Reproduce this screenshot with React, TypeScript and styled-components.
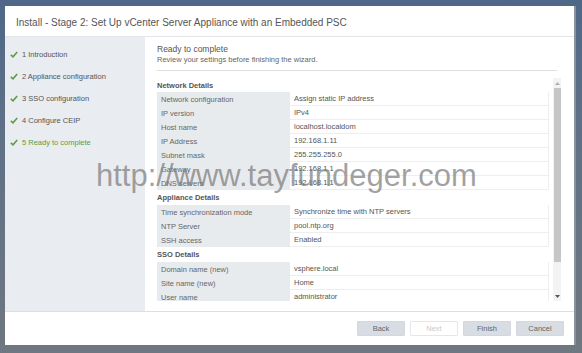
import { FC, ReactElement } from "react";
import styled, { createGlobalStyle } from "styled-components";

const GlobalStyle = createGlobalStyle`
    html, body {
        margin: 0;
        padding: 0;
        width: 582px;
        height: 353px;
        overflow: hidden;
        font-family: "Liberation Sans", Arial, sans-serif;
    }
`;

const Page = styled.div`
    position: relative;
    width: 582px;
    height: 353px;
    box-sizing: border-box;
    padding: 6px 6px 8px 5px;
    background: linear-gradient(180deg, #4f6888 0%, #5f7186 40%, #6f7780 100%);
`;

const Dialog = styled.div`
    display: flex;
    flex-direction: column;
    width: 569px;
    height: 339px;
    background: #ffffff;
    border-right: 2px solid #8a939d;
    box-sizing: content-box;
`;

const Header = styled.div`
    display: flex;
    align-items: center;
    height: 31px;
    padding: 3px 0 0 11px;
    box-sizing: border-box;
    border-bottom: 1px solid #e3e5e8;
    font-size: 10px;
    color: #555;
    flex-shrink: 0;
`;

const Body = styled.div`
    display: flex;
    flex-direction: row;
    height: 274px;
    flex-shrink: 0;
`;

const Sidebar = styled.nav`
    display: flex;
    flex-direction: column;
    width: 140px;
    padding-top: 6px;
    box-sizing: border-box;
    background: #e9ecf0;
`;

const Step = styled.div<{ $active: boolean }>`
    display: flex;
    align-items: center;
    gap: 4px;
    height: 22px;
    padding-left: 5px;
    font-size: 7.5px;
    color: ${(p) => (p.$active ? "#5e9c43" : "#555")};
`;

const Content = styled.section`
    display: flex;
    flex-direction: column;
    flex: 1;
    padding: 7px 13px 0 12px;
    min-width: 0;
`;

const PageTitle = styled.div`
    font-size: 8.5px;
    line-height: 11px;
    color: #555;
`;

const PageSub = styled.div`
    font-size: 7.5px;
    line-height: 10px;
    color: #666;
    padding-bottom: 5px;
    border-bottom: 1px solid #dcdfe3;
    margin-right: 4px;
`;

const ScrollArea = styled.div`
    display: flex;
    flex-direction: row;
    gap: 4px;
    margin-top: 7px;
    height: 223px;
`;

const TableClip = styled.div`
    flex: 1;
    overflow: hidden;
`;

const SectionTitle = styled.div<{ $spaced: boolean }>`
    display: flex;
    align-items: center;
    height: ${(p) => (p.$spaced ? "15px" : "14px")};
    font-size: 7.5px;
    font-weight: bold;
    color: #555;
`;

const Row = styled.div`
    display: grid;
    grid-template-columns: 133px 1fr;
    height: 14px;
    font-size: 7.5px;
`;

const Label = styled.div`
    display: flex;
    align-items: center;
    padding-left: 4px;
    background: #e8ebee;
    color: #666;
`;

const Value = styled.div`
    display: flex;
    align-items: center;
    padding-left: 4px;
    color: #555;
    border-bottom: 1px solid #eceef0;
    border-right: 1px solid #eceef0;
`;

const Scrollbar = styled.div`
    display: flex;
    flex-direction: column;
    align-items: center;
    width: 8px;
    background: #f3f3f3;
`;

const Arrow = styled.div`
    display: flex;
    align-items: center;
    justify-content: center;
    height: 10px;
    width: 8px;
`;

const Thumb = styled.div`
    width: 7px;
    height: 174px;
    background: #c6c6c6;
`;

const Spacer = styled.div`
    flex: 1;
`;

const Footer = styled.div`
    display: flex;
    justify-content: flex-end;
    align-items: center;
    gap: 5px;
    flex: 1;
    padding-right: 10px;
    border-top: 1px solid #dcdfe3;
`;

const Button = styled.button<{ $disabled?: boolean }>`
    width: 48px;
    height: 15px;
    padding: 0;
    font-family: inherit;
    font-size: 7.5px;
    color: ${(p) => (p.$disabled ? "#c9c9c9" : "#666")};
    background: ${(p) => (p.$disabled ? "#ffffff" : "#d8dde3")};
    border: 1px solid ${(p) => (p.$disabled ? "#e4e6e9" : "#d3d8de")};
    border-radius: 1px;
`;

const Watermark = styled.div`
    position: absolute;
    left: 96px;
    top: 160px;
    font-size: 31px;
    line-height: 31px;
    color: rgba(125, 125, 125, 0.72);
    white-space: nowrap;
    pointer-events: none;
`;

const Check: FC = (): ReactElement => (
    <svg width="8" height="7" viewBox="0 0 8 7">
        <path d="M0.8 3.8 L3 5.8 L7.2 1" stroke="#5e9c43" strokeWidth="1.6" fill="none" />
    </svg>
);

type Item = [string, string];

const sections: { title: string, rows: Item[] }[] = [
    {
        title: "Network Details",
        rows: [
            ["Network configuration", "Assign static IP address"],
            ["IP version", "IPv4"],
            ["Host name", "localhost.localdom"],
            ["IP Address", "192.168.1.11"],
            ["Subnet mask", "255.255.255.0"],
            ["Gateway", "192.168.1.1"],
            ["DNS servers", "192.168.1.1"],
        ],
    },
    {
        title: "Appliance Details",
        rows: [
            ["Time synchronization mode", "Synchronize time with NTP servers"],
            ["NTP Server", "pool.ntp.org"],
            ["SSH access", "Enabled"],
        ],
    },
    {
        title: "SSO Details",
        rows: [
            ["Domain name (new)", "vsphere.local"],
            ["Site name (new)", "Home"],
            ["User name", "administrator"],
        ],
    },
];

const steps = [
    "1 Introduction",
    "2 Appliance configuration",
    "3 SSO configuration",
    "4 Configure CEIP",
    "5 Ready to complete",
];

export default function App(): ReactElement {
    return (
        <Page>
            <GlobalStyle />
            <Dialog>
                <Header>Install - Stage 2: Set Up vCenter Server Appliance with an Embedded PSC</Header>
                <Body>
                    <Sidebar>
                        {steps.map((step, index) => (
                            <Step key={step} $active={index === steps.length - 1}>
                                <Check />
                                {step}
                            </Step>
                        ))}
                    </Sidebar>
                    <Content>
                        <PageTitle>Ready to complete</PageTitle>
                        <PageSub>Review your settings before finishing the wizard.</PageSub>
                        <ScrollArea>
                            <TableClip>
                                {sections.map((section, index) => (
                                    <div key={section.title}>
                                        <SectionTitle $spaced={index > 0}>{section.title}</SectionTitle>
                                        {section.rows.map(([label, value]) => (
                                            <Row key={label}>
                                                <Label>{label}</Label>
                                                <Value>{value}</Value>
                                            </Row>
                                        ))}
                                    </div>
                                ))}
                            </TableClip>
                            <Scrollbar>
                                <Arrow>
                                    <svg width="5" height="3" viewBox="0 0 5 3">
                                        <path d="M0 3 L2.5 0 L5 3 Z" fill="#b0b0b0" />
                                    </svg>
                                </Arrow>
                                <Thumb />
                                <Spacer />
                                <Arrow>
                                    <svg width="5" height="3" viewBox="0 0 5 3">
                                        <path d="M0 0 L2.5 3 L5 0 Z" fill="#555" />
                                    </svg>
                                </Arrow>
                            </Scrollbar>
                        </ScrollArea>
                    </Content>
                </Body>
                <Footer>
                    <Button>Back</Button>
                    <Button $disabled>Next</Button>
                    <Button>Finish</Button>
                    <Button>Cancel</Button>
                </Footer>
            </Dialog>
            <Watermark>http://www.tayfundeger.com</Watermark>
        </Page>
    );
}
